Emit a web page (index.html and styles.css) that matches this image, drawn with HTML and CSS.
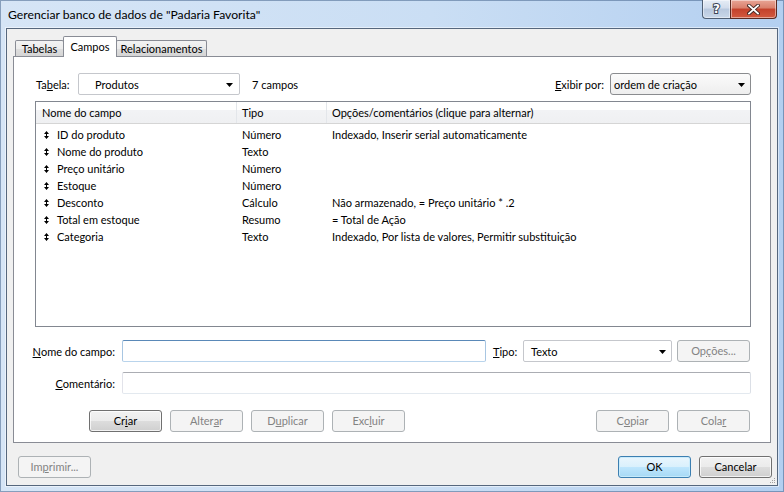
FILE: index.html
```html
<!DOCTYPE html>
<html lang="pt-BR">
<head>
<meta charset="utf-8">
<title>Gerenciar banco de dados</title>
<link rel="stylesheet" href="styles.css">
</head>
<body>
<div class="window">
  <div class="titlebar">
    <div class="title">Gerenciar banco de dados de "Padaria Favorita"</div>
    <div class="caption-btns">
      <div class="cbtn help"><span>?</span></div>
      <div class="cbtn close">
        <svg width="13" height="11" viewBox="0 0 13 11"><path d="M2 1.5 L11 9.5 M11 1.5 L2 9.5" stroke="#3b2420" stroke-width="3.6" stroke-linecap="square"/><path d="M2 1.5 L11 9.5 M11 1.5 L2 9.5" stroke="#ffffff" stroke-width="1.8" stroke-linecap="square"/></svg>
      </div>
    </div>
  </div>
  <div class="client">
    <div class="tabs">
      <div class="tab tab-tabelas">Tabelas</div>
      <div class="tab tab-campos active">Campos</div>
      <div class="tab tab-rel">Relacionamentos</div>
    </div>
    <div class="panel">
      <div class="toprow">
        <span class="lbl-tabela">Ta<u>b</u>ela:</span>
        <div class="combo combo-table"><span class="combo-text">Produtos</span><svg class="arrow" width="7" height="4" viewBox="0 0 7 4"><path d="M0 0 H7 L3.5 4 Z" fill="#000"/></svg></div>
        <span class="count">7 campos</span>
        <span class="spacer"></span>
        <span class="lbl-exibir"><u>E</u>xibir por:</span>
        <div class="combo combo-view"><span class="combo-text">ordem de criação</span><svg class="arrow" width="7" height="4" viewBox="0 0 7 4"><path d="M0 0 H7 L3.5 4 Z" fill="#000"/></svg></div>
      </div>
      <div class="list">
        <div class="lhead">
          <div class="c1">Nome do campo</div>
          <div class="c2">Tipo</div>
          <div class="c3">Opções/comentários (clique para alternar)</div>
        </div>
        <div class="lbody">
          <div class="lrow"><div class="c1"><svg class="mark" width="5" height="8" viewBox="0 0 5 8"><path d="M2.5 0 L5 3 H0 Z M2 3 H3 V5 H2 Z M0 5 H5 L2.5 8 Z" fill="#000"/></svg>ID do produto</div><div class="c2">Número</div><div class="c3">Indexado, Inserir serial automaticamente</div></div>
          <div class="lrow"><div class="c1"><svg class="mark" width="5" height="8" viewBox="0 0 5 8"><path d="M2.5 0 L5 3 H0 Z M2 3 H3 V5 H2 Z M0 5 H5 L2.5 8 Z" fill="#000"/></svg>Nome do produto</div><div class="c2">Texto</div><div class="c3"></div></div>
          <div class="lrow"><div class="c1"><svg class="mark" width="5" height="8" viewBox="0 0 5 8"><path d="M2.5 0 L5 3 H0 Z M2 3 H3 V5 H2 Z M0 5 H5 L2.5 8 Z" fill="#000"/></svg>Preço unitário</div><div class="c2">Número</div><div class="c3"></div></div>
          <div class="lrow"><div class="c1"><svg class="mark" width="5" height="8" viewBox="0 0 5 8"><path d="M2.5 0 L5 3 H0 Z M2 3 H3 V5 H2 Z M0 5 H5 L2.5 8 Z" fill="#000"/></svg>Estoque</div><div class="c2">Número</div><div class="c3"></div></div>
          <div class="lrow"><div class="c1"><svg class="mark" width="5" height="8" viewBox="0 0 5 8"><path d="M2.5 0 L5 3 H0 Z M2 3 H3 V5 H2 Z M0 5 H5 L2.5 8 Z" fill="#000"/></svg>Desconto</div><div class="c2">Cálculo</div><div class="c3">Não armazenado, = Preço unitário * .2</div></div>
          <div class="lrow"><div class="c1"><svg class="mark" width="5" height="8" viewBox="0 0 5 8"><path d="M2.5 0 L5 3 H0 Z M2 3 H3 V5 H2 Z M0 5 H5 L2.5 8 Z" fill="#000"/></svg>Total em estoque</div><div class="c2">Resumo</div><div class="c3">= Total de Ação</div></div>
          <div class="lrow"><div class="c1"><svg class="mark" width="5" height="8" viewBox="0 0 5 8"><path d="M2.5 0 L5 3 H0 Z M2 3 H3 V5 H2 Z M0 5 H5 L2.5 8 Z" fill="#000"/></svg>Categoria</div><div class="c2">Texto</div><div class="c3">Indexado, Por lista de valores, Permitir substituição</div></div>
        </div>
      </div>
      <div class="formrow">
        <span class="flabel"><u>N</u>ome do campo:</span>
        <div class="input focus"></div>
        <span class="lbl-tipo"><u>T</u>ipo:</span>
        <div class="combo combo-tipo"><span class="combo-text">Texto</span><svg class="arrow" width="7" height="4" viewBox="0 0 7 4"><path d="M0 0 H7 L3.5 4 Z" fill="#000"/></svg></div>
        <div class="btn disabled btn-opcoes">Op<u>ç</u>ões...</div>
      </div>
      <div class="formrow row2">
        <span class="flabel"><u>C</u>omentário:</span>
        <div class="input"></div>
      </div>
      <div class="btnrow">
        <div class="btn">Cr<u>i</u>ar</div>
        <div class="btn disabled">Alter<u>a</u>r</div>
        <div class="btn disabled">D<u>u</u>plicar</div>
        <div class="btn disabled">Exc<u>l</u>uir</div>
        <span class="spacer"></span>
        <div class="btn disabled">C<u>o</u>piar</div>
        <div class="btn disabled last">Cola<u>r</u></div>
      </div>
    </div>
    <div class="footer">
      <div class="btn disabled">Im<u>p</u>rimir...</div>
      <span class="spacer"></span>
      <div class="btn default">OK</div>
      <div class="btn cancel">Cancelar</div>
    </div>
    <svg class="grip" width="6" height="6" viewBox="0 0 6 6"><g fill="#a0a0a0"><rect x="4" y="0" width="1" height="1"/><rect x="2" y="2" width="1" height="1"/><rect x="4" y="2" width="1" height="1"/><rect x="0" y="4" width="1" height="1"/><rect x="2" y="4" width="1" height="1"/><rect x="4" y="4" width="1" height="1"/></g></svg>
  </div>
</div>
</body>
</html>
```
FILE: styles.css
```css
* { box-sizing: border-box; }
html, body { margin: 0; padding: 0; }
body {
  width: 784px;
  height: 492px;
  overflow: hidden;
  font-family: Lato, "Open Sans", sans-serif;
  font-size: 11px;
  color: #000;
  background: #b9d3f0;
}
u { text-decoration: underline; text-underline-offset: 1px; }

.window {
  width: 784px;
  height: 492px;
  display: flex;
  flex-direction: column;
  background: linear-gradient(to right, #d6e5f6 0%, #cadef4 55%, #b3cff0 100%);
  box-shadow: inset 0 0 0 1px rgba(70, 100, 140, 0.55);
}

.titlebar {
  height: 28px;
  display: flex;
  align-items: flex-start;
  flex: none;
}
.title {
  padding-left: 8px;
  line-height: 29px;
  font-size: 12.2px;
  color: #000;
  white-space: nowrap;
}
.caption-btns {
  margin-left: auto;
  margin-right: 7px;
  display: flex;
}
.cbtn {
  height: 19px;
  border: 1px solid #4f5f74;
  border-top: none;
  display: flex;
  align-items: center;
  justify-content: center;
  box-shadow: inset 0 0 0 1px rgba(255, 255, 255, 0.45);
}
.help {
  width: 28px;
  border-right: none;
  border-radius: 0 0 0 4px;
  background: linear-gradient(#e6edf6 0%, #d2dceb 45%, #b8c8de 50%, #c9d7e9 100%);
}
.help span {
  font-family: "DejaVu Sans", sans-serif;
  font-weight: bold;
  font-size: 12px;
  line-height: 12px;
  color: #fff;
  -webkit-text-stroke: 2px #3a4455;
  paint-order: stroke fill;
}
.close {
  width: 47px;
  border-radius: 0 0 4px 0;
  border-color: #5a2a22;
  background: linear-gradient(#e8a596 0%, #d97f6b 45%, #c3412b 50%, #d25a40 100%);
}

.client {
  flex: 1;
  margin: 0 6px 6px 6px;
  border: 1px solid #56677d;
  background: #f0f0f0;
  display: flex;
  flex-direction: column;
  position: relative;
  box-shadow: 0 0 0 1px rgba(255, 255, 255, 0.5);
}

.tabs {
  margin: 7px 0 0 8px;
  height: 21px;
  display: flex;
  align-items: flex-end;
}
.tab {
  height: 17px;
  border: 1px solid #898c95;
  border-bottom: none;
  border-radius: 2px 2px 0 0;
  background: linear-gradient(#f3f3f3 0%, #ebebeb 50%, #dedede 50%, #d3d3d3 100%);
  text-align: center;
  line-height: 16px;
  white-space: nowrap;
}
.tab-tabelas { width: 49px; }
.tab-campos { width: 54px; margin-left: -1px; }
.tab-rel { width: 91px; margin-left: -1px; }
.tab.active {
  height: 21px;
  background: #fff;
  position: relative;
  z-index: 2;
  line-height: 19px;
}

.panel {
  margin: -1px 6px 0 6px;
  height: 387px;
  border: 1px solid #898c95;
  background: #fff;
  padding: 16px 19px 10px 21px;
  display: flex;
  flex-direction: column;
  flex: none;
}

.spacer { flex: 1; }

.toprow {
  height: 22px;
  display: flex;
  align-items: center;
  white-space: nowrap;
}
.lbl-tabela { width: 43px; padding-left: 1px; }
.count { margin-left: 12px; }
.lbl-exibir { margin-right: 6px; }

.combo {
  height: 22px;
  border: 1px solid #c5c7cc;
  border-radius: 2px;
  background: #fff;
  display: flex;
  align-items: center;
  position: relative;
}
.combo .arrow { position: absolute; top: 9px; }
.combo-table { width: 162px; padding-left: 16px; }
.combo-table .arrow { right: 6px; }
.combo-view {
  width: 141px;
  padding-left: 3px;
  border-color: #8a8c8f;
  border-radius: 3px;
  background: linear-gradient(#fbfbfb, #eeeeee);
}
.combo-view .arrow { right: 5px; }
.combo-tipo { width: 149px; padding-left: 7px; }
.combo-tipo .arrow { right: 5px; }

.list {
  margin-top: 6px;
  height: 226px;
  border: 1px solid #828790;
  flex: none;
  white-space: nowrap;
}
.lhead {
  height: 22px;
  display: flex;
  border-bottom: 1px solid #d5d5d5;
  background: linear-gradient(#ffffff 0%, #ffffff 40%, #f2f3f5 40%, #eff0f2 100%);
}
.lhead > div { line-height: 21px; border-right: 1px solid #e3e6ea; }
.c1 { width: 201px; padding-left: 6px; flex: none; display: flex; align-items: center; }
.c2 { width: 90px; padding-left: 5px; flex: none; }
.c3 { flex: 1; padding-left: 5px; }
.lhead .c3 { border-right: none; }
.lbody { padding-top: 2px; }
.lrow { height: 17px; line-height: 17px; display: flex; }
.lrow .c1 { padding-left: 8px; }
.mark { margin-right: 8px; flex: none; }

.formrow {
  margin-top: 13px;
  height: 22px;
  display: flex;
  align-items: center;
  white-space: nowrap;
}
.formrow.row2 { margin-top: 10px; }
.flabel {
  width: 80px;
  margin-right: 7px;
  flex: none;
  display: flex;
  justify-content: flex-end;
}
.input {
  flex: 1;
  height: 22px;
  border: 1px solid;
  border-color: #abadb3 #dbdfe6 #e3e9ef #e2e3ea;
  border-radius: 2px;
  background: #fff;
}
.input.focus { border-color: #5a89b8 #a8c6e2 #b9d4ec #a8c6e2; }
.lbl-tipo { width: 30px; margin-left: 7px; flex: none; }
.btn-opcoes { margin-left: 5px; margin-right: 1px; }

.btn {
  width: 73px;
  height: 22px;
  flex: none;
  border: 1px solid #707070;
  border-radius: 3px;
  background: linear-gradient(#f2f2f2 0%, #ebebeb 50%, #dddddd 50%, #cfcfcf 100%);
  box-shadow: inset 0 0 0 1px rgba(255, 255, 255, 0.75);
  display: flex;
  align-items: center;
  justify-content: center;
  padding-bottom: 1px;
  white-space: nowrap;
}
.btn.disabled {
  border-color: #adb2b5;
  background: #f4f4f4;
  box-shadow: none;
  color: #838383;
}
.btn.default {
  border-color: #3c7fb1;
  background: linear-gradient(#eaf6fd 0%, #d9f0fc 50%, #bee6fd 50%, #a7d9f5 100%);
  box-shadow: inset 0 0 0 1px rgba(200, 235, 252, 0.9);
}

.btnrow {
  margin-top: 16px;
  height: 22px;
  display: flex;
  padding-left: 54px;
  gap: 8px;
}
.btnrow .last { margin-right: 1px; }

.footer {
  margin-top: 13px;
  height: 22px;
  display: flex;
  padding: 0 5px 0 11px;
}
.cancel { margin-left: 8px; }

.grip { position: absolute; right: 1px; bottom: 1px; }
```
